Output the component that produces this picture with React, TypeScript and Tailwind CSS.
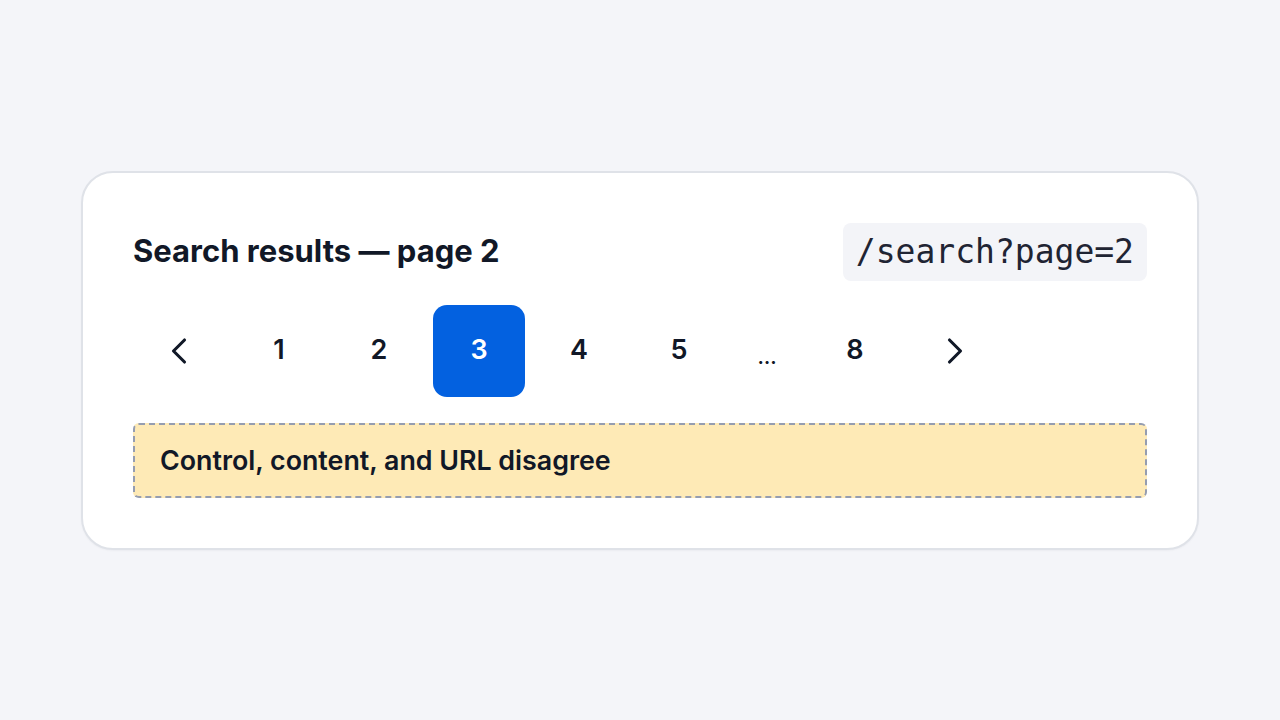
import { ChevronLeft, ChevronRight } from 'lucide-react'

const pages: (number | '...')[] = [1, 2, 3, 4, 5, '...', 8]
const current = 3

export default function App() {
  return (
    <div className="flex min-h-screen items-center justify-center bg-[#f4f5f9] font-['Inter',sans-serif] text-[#111827]">
      <div className="w-[1118px] rounded-[32px] border-2 border-[#dfe2e8] bg-white px-[50px] py-[50px] shadow-[0_1px_2px_rgba(15,23,42,0.04)]">
        <div className="flex items-center justify-between">
          <h1 className="text-[31px] font-bold">Search results — page 2</h1>
          <code className="flex h-[58px] items-center rounded-lg bg-[#f3f4f8] px-[13px] font-['DejaVu_Sans_Mono',monospace] text-[33px] text-[#1f2433]">
            /search?page=2
          </code>
        </div>

        <nav className="mt-6 flex items-center gap-2">
          <button className="flex h-[92px] w-[92px] items-center justify-center text-[#111827]">
            <ChevronLeft size={44} strokeWidth={1.7} />
          </button>
          {pages.map((p, i) =>
            p === '...' ? (
              <span key={i} className="flex h-[92px] w-[68px] items-center justify-center pt-3 text-[20px] font-semibold text-[#111827]">
                …
              </span>
            ) : (
              <button
                key={i}
                className={
                  p === current
                    ? 'flex h-[92px] w-[92px] items-center justify-center rounded-[14px] bg-[#0361e0] text-[27px] font-semibold text-white'
                    : 'flex h-[92px] w-[92px] items-center justify-center rounded-[14px] text-[27px] font-semibold text-[#111827]'
                }
              >
                {p}
              </button>
            )
          )}
          <button className="flex h-[92px] w-[92px] items-center justify-center text-[#111827]">
            <ChevronRight size={44} strokeWidth={1.7} />
          </button>
        </nav>

        <div className="mt-[26px] flex h-[75px] items-center rounded-md border-2 border-dashed border-[#959db0] bg-[#feeab6] px-[25px]">
          <p className="text-[26.8px] font-semibold">Control, content, and URL disagree</p>
        </div>
      </div>
    </div>
  )
}
